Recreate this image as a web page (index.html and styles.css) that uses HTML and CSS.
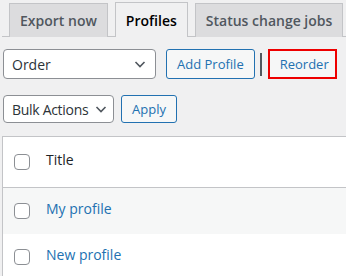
FILE: index.html
```html
<html lang="en">
<head>
    <meta charset="UTF-8">
    <title>Profiles</title>
    <link rel="stylesheet" href="styles.css">
</head>
<body>
    <div class="wrap">
        <nav class="nav-tab-wrapper">
            <a class="nav-tab">Export now</a>
            <a class="nav-tab nav-tab-active">Profiles</a>
            <a class="nav-tab">Status change jobs</a>
        </nav>

        <div class="toolbar">
            <div class="select order-select">
                <span>Order</span>
                <svg width="14" height="14" viewBox="0 0 14 14"><path d="M2.5 5 L7 9.5 L11.5 5" fill="none" stroke="#50575e" stroke-width="1.6"/></svg>
            </div>
            <button class="button">Add Profile</button>
            <span class="divider"></span>
            <button class="button reorder">Reorder</button>
        </div>

        <div class="tablenav">
            <div class="select bulk-select">
                <span>Bulk Actions</span>
                <svg width="14" height="14" viewBox="0 0 14 14"><path d="M2.5 5 L7 9.5 L11.5 5" fill="none" stroke="#50575e" stroke-width="1.6"/></svg>
            </div>
            <button class="button">Apply</button>
        </div>

        <div class="list-table">
            <div class="row head">
                <span class="check"></span>
                <span class="title">Title</span>
            </div>
            <div class="row alt">
                <span class="check"></span>
                <a class="title link">My profile</a>
            </div>
            <div class="row">
                <span class="check"></span>
                <a class="title link">New profile</a>
            </div>
        </div>
    </div>
</body>
</html>
```

FILE: styles.css
```css
* {
    box-sizing: border-box;
}
body {
    margin: 0;
    background: #f0f0f1;
    font-family: "Open Sans", "Noto Sans", sans-serif;
    color: #3c434a;
    font-size: 14px;
}
.wrap {
    padding: 2px 0 0 2px;
}
.nav-tab-wrapper { /* tabs along the top */
    display: flex;
    border-bottom: 1px solid #c3c4c7;
    height: 35px;
}
.nav-tab {
    border: 1px solid #c3c4c7;
    border-bottom: none;
    margin-left: 7px;
    padding: 5px 10px;
    font-size: 14px;
    line-height: 24px;
    font-weight: 600;
    background: #dcdcde;
    color: #50575e;
    height: 34px;
    margin-top: 1px;
    white-space: nowrap;
}
.nav-tab-active {
    background: #f0f0f1;
    color: #000;
    height: 35px;
    margin-top: 0;
    padding-top: 6px;
}
.toolbar {
    display: flex;
    align-items: center;
    margin-top: 12px;
    padding-left: 1px;
}
.tablenav {
    display: flex;
    align-items: center;
    margin-top: 16px;
    padding-left: 1px;
}
.select {
    display: flex;
    align-items: center;
    justify-content: space-between;
    height: 30px;
    border: 1px solid #8c8f94;
    border-radius: 4px;
    background: #fff;
    color: #2c3338;
    font-size: 14px;
    padding: 0 8px;
    white-space: nowrap;
}
.order-select {
    width: 153px;
}
.bulk-select {
    width: 111px;
    height: 28px;
    padding: 0 5px 0 8px;
    letter-spacing: -0.3px;
}
.button {
    height: 30px;
    border: 1px solid #2271b1;
    border-radius: 3px;
    background: #f6f7f7;
    color: #2271b1;
    font-family: "Open Sans", "Noto Sans", sans-serif;
    font-size: 13px;
    padding: 0 10px;
    margin-left: 10px;
    white-space: nowrap;
}
.tablenav .button {
    height: 28px;
    margin-left: 7px;
}
.divider {
    width: 2px;
    height: 23px;
    background: #50575e;
    margin-left: 5px;
}
.reorder {
    border: 2px solid #e00;
    border-radius: 0;
    margin-left: 6px;
    width: 69px;
}
.list-table {
    margin-top: 13px;
    border: 1px solid #c3c4c7;
    border-right: none;
    background: #fff;
}
.row {
    display: flex;
    align-items: center;
    height: 46px;
    padding-left: 11px;
}
.row.head {
    height: 51px;
    border-bottom: 1px solid #c3c4c7;
}
.row.alt {
    background: #f6f7f7;
}
.check {
    width: 16px;
    height: 16px;
    border: 1px solid #8c8f94;
    border-radius: 4px;
    background: #fff;
}
.title {
    margin-left: 16px;
    font-size: 14px;
    line-height: 20px;
    margin-top: -4px;
    color: #1d2327;
}
.link {
    color: #2271b1;
}
```
